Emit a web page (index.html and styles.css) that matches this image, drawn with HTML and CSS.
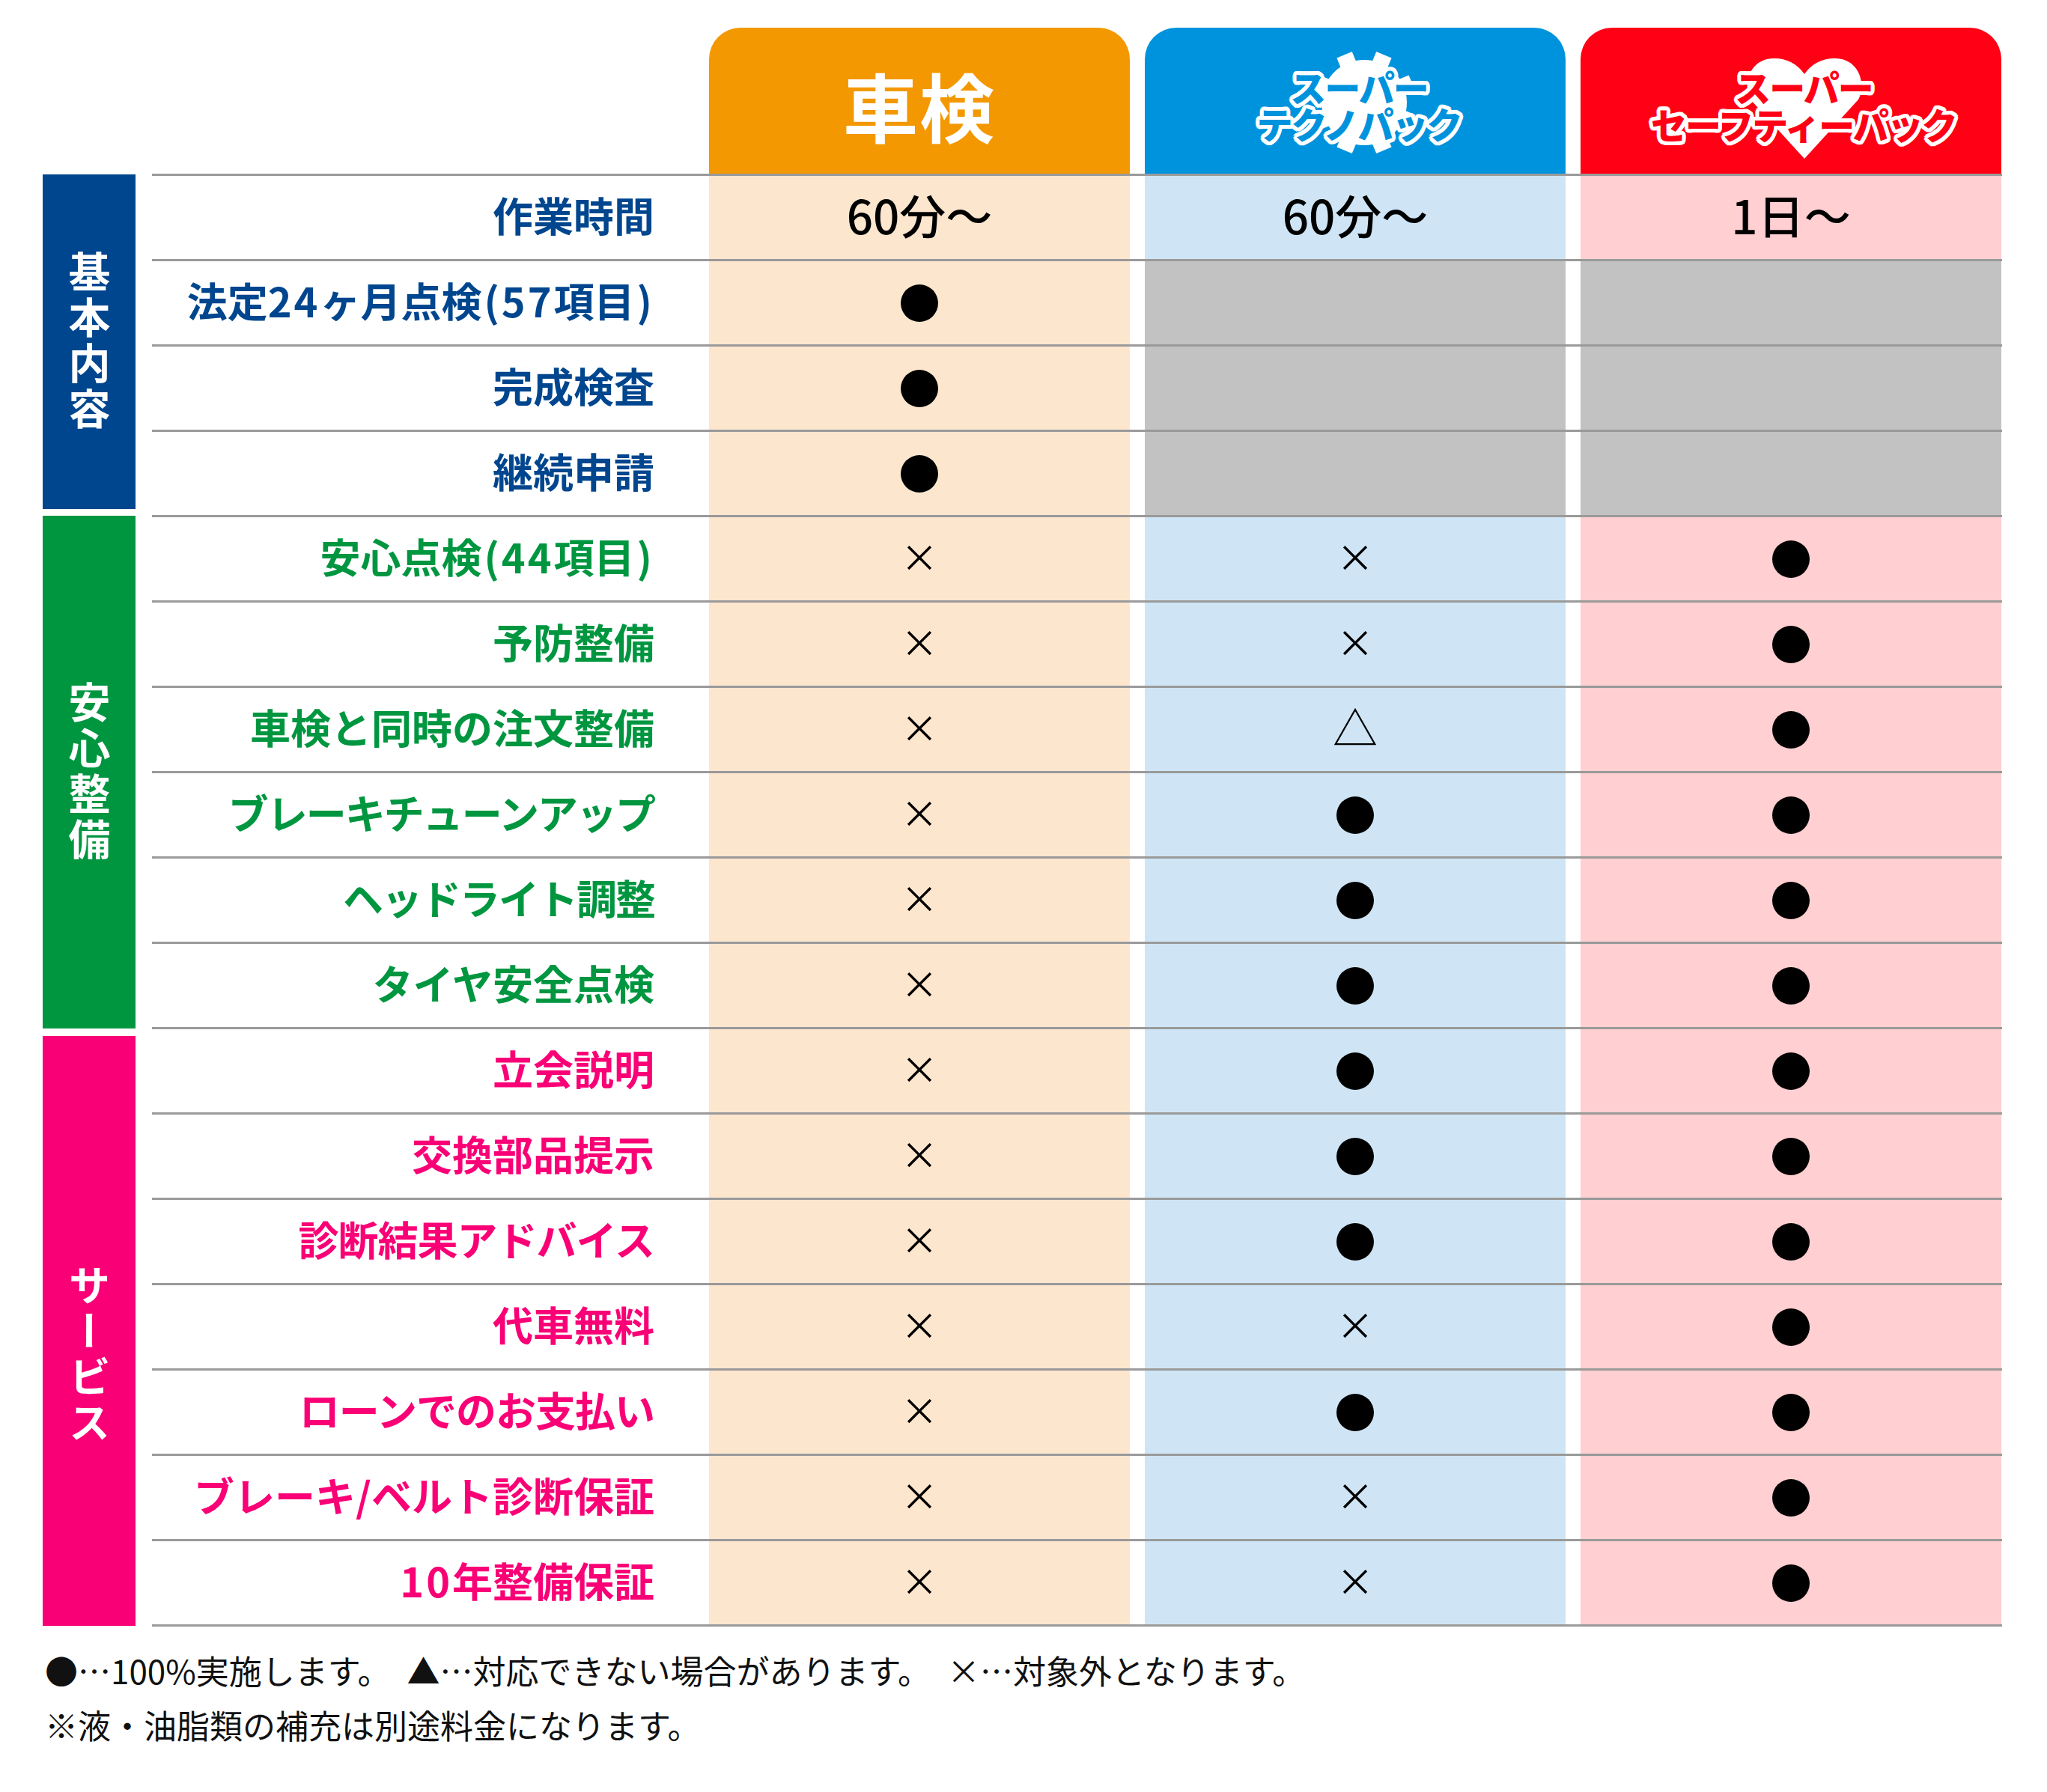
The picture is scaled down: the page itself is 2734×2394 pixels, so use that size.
FILE: index.html
```html
<!DOCTYPE html>
<html lang="ja">
<head>
<meta charset="utf-8">
<title>車検・スーパーテクノパック・スーパーセーフティーパック 比較表</title>
<link rel="stylesheet" href="styles.css">
</head>
<body>
<div class="page">
  <div class="heads">
    <div class="head head-o"><span class="head-title">車検</span></div>
    <div class="head head-b logo-box">
      <svg class="logo" viewBox="0 0 562 195" width="562" height="195">
        <g transform="translate(293 100)" fill="#fff">
          <circle r="57"/>
          <rect x="-11" y="-69" width="22" height="26" transform="rotate(22.5)"/>
          <rect x="-11" y="-69" width="22" height="26" transform="rotate(67.5)"/>
          <rect x="-11" y="-69" width="22" height="26" transform="rotate(112.5)"/>
          <rect x="-11" y="-69" width="22" height="26" transform="rotate(157.5)"/>
          <rect x="-11" y="-69" width="22" height="26" transform="rotate(202.5)"/>
          <rect x="-11" y="-69" width="22" height="26" transform="rotate(247.5)"/>
          <rect x="-11" y="-69" width="22" height="26" transform="rotate(292.5)"/>
          <rect x="-11" y="-69" width="22" height="26" transform="rotate(337.5)"/>
        </g>
      </svg>
      <p class="logo-t logo-tb">スーパー<br>テクノパック</p>
    </div>
    <div class="head head-r logo-box">
      <svg class="logo" viewBox="0 0 562 195" width="562" height="195">
        <path fill="#fff" d="M299 62 C288 45 267 38 249 42 C230 47 221 64 223 84 C224 89 225 92 227 96 L299 175 L371 96 C373 92 374 89 375 84 C377 64 368 47 349 42 C331 38 310 45 299 62 Z"/>
      </svg>
      <p class="logo-t logo-tr">スーパー<br>セーフティーパック</p>
    </div>
  </div>

  <div class="body">
    <div class="cats">
      <div class="cat cat-nv"><span>基本内容</span></div>
      <div class="cat cat-gr"><span>安心整備</span></div>
      <div class="cat cat-pk"><span>サービス</span></div>
    </div>

    <div class="rows">
      <div class="row"><div class="label nv"><span class="lt">作業時間</span></div><div class="cells"><div class="cell o"><span class="time">60分～</span></div><div class="cell b"><span class="time">60分～</span></div><div class="cell r"><span class="time">1日～</span></div></div></div>
      <div class="row"><div class="label nv"><span class="lt">法定<span class="num">24</span>ヶ月点検<span class="pa">(</span><span class="num">57</span>項目<span class="pa">)</span></span></div><div class="cells"><div class="cell o"><span class="dot"></span></div><div class="cell g"></div><div class="cell g"></div></div></div>
      <div class="row"><div class="label nv"><span class="lt">完成検査</span></div><div class="cells"><div class="cell o"><span class="dot"></span></div><div class="cell g"></div><div class="cell g"></div></div></div>
      <div class="row"><div class="label nv"><span class="lt">継続申請</span></div><div class="cells"><div class="cell o"><span class="dot"></span></div><div class="cell g"></div><div class="cell g"></div></div></div>

      <div class="row"><div class="label gr"><span class="lt">安心点検<span class="pa">(</span><span class="num">44</span>項目<span class="pa">)</span></span></div><div class="cells"><div class="cell o"><span class="x">×</span></div><div class="cell b"><span class="x">×</span></div><div class="cell r"><span class="dot"></span></div></div></div>
      <div class="row"><div class="label gr"><span class="lt">予防整備</span></div><div class="cells"><div class="cell o"><span class="x">×</span></div><div class="cell b"><span class="x">×</span></div><div class="cell r"><span class="dot"></span></div></div></div>
      <div class="row"><div class="label gr"><span class="lt">車検と同時の注文整備</span></div><div class="cells"><div class="cell o"><span class="x">×</span></div><div class="cell b"><span class="tri">△</span></div><div class="cell r"><span class="dot"></span></div></div></div>
      <div class="row"><div class="label gr"><span class="lt kana">ブレーキチューンアップ</span></div><div class="cells"><div class="cell o"><span class="x">×</span></div><div class="cell b"><span class="dot"></span></div><div class="cell r"><span class="dot"></span></div></div></div>
      <div class="row"><div class="label gr"><span class="lt kana">ヘッドライト調整</span></div><div class="cells"><div class="cell o"><span class="x">×</span></div><div class="cell b"><span class="dot"></span></div><div class="cell r"><span class="dot"></span></div></div></div>
      <div class="row"><div class="label gr"><span class="lt">タイヤ安全点検</span></div><div class="cells"><div class="cell o"><span class="x">×</span></div><div class="cell b"><span class="dot"></span></div><div class="cell r"><span class="dot"></span></div></div></div>

      <div class="row"><div class="label pk"><span class="lt">立会説明</span></div><div class="cells"><div class="cell o"><span class="x">×</span></div><div class="cell b"><span class="dot"></span></div><div class="cell r"><span class="dot"></span></div></div></div>
      <div class="row"><div class="label pk"><span class="lt">交換部品提示</span></div><div class="cells"><div class="cell o"><span class="x">×</span></div><div class="cell b"><span class="dot"></span></div><div class="cell r"><span class="dot"></span></div></div></div>
      <div class="row"><div class="label pk"><span class="lt kana-s">診断結果アドバイス</span></div><div class="cells"><div class="cell o"><span class="x">×</span></div><div class="cell b"><span class="dot"></span></div><div class="cell r"><span class="dot"></span></div></div></div>
      <div class="row"><div class="label pk"><span class="lt">代車無料</span></div><div class="cells"><div class="cell o"><span class="x">×</span></div><div class="cell b"><span class="x">×</span></div><div class="cell r"><span class="dot"></span></div></div></div>
      <div class="row"><div class="label pk"><span class="lt kana-s">ローンでのお支払い</span></div><div class="cells"><div class="cell o"><span class="x">×</span></div><div class="cell b"><span class="dot"></span></div><div class="cell r"><span class="dot"></span></div></div></div>
      <div class="row"><div class="label pk"><span class="lt">ブレーキ/ベルト診断保証</span></div><div class="cells"><div class="cell o"><span class="x">×</span></div><div class="cell b"><span class="x">×</span></div><div class="cell r"><span class="dot"></span></div></div></div>
      <div class="row"><div class="label pk"><span class="lt"><span class="num">10</span>年整備保証</span></div><div class="cells"><div class="cell o"><span class="x">×</span></div><div class="cell b"><span class="x">×</span></div><div class="cell r"><span class="dot"></span></div></div></div>
    </div>
  </div>

  <div class="notes">
    <p class="note">●…100%実施します。　▲…対応できない場合があります。　×…対象外となります。</p>
    <p class="note">※液・油脂類の補充は別途料金になります。</p>
  </div>
</div>
</body>
</html>
```

FILE: styles.css
```css
html, body {
  margin: 0;
  padding: 0;
  background: #ffffff;
}

body {
  font-family: "Noto Sans CJK JP", "Noto Sans", sans-serif;
  color: #111111;
}

.page {
  width: 2734px;
  box-sizing: border-box;
  padding: 37px 0 0 57px;
}

/* ===== header cards ===== */
.heads {
  display: flex;
  gap: 20px;
  padding-left: 890px;
}

.head {
  width: 562px;
  height: 195px;
  border-radius: 42px 42px 0 0;
  overflow: hidden;
}

.head-o {
  background: #f39800;
  display: flex;
  align-items: center;
  justify-content: center;
  box-sizing: border-box;
  padding-top: 10px;
}

.head-b { background: #0093dd; }
.head-r { background: #ff0015; }

.head-title {
  font-size: 100px;
  font-weight: 700;
  line-height: 1;
  color: #ffffff;
  letter-spacing: 2px;
}

/* logo: svg graphic and text stacked in one grid cell */
.logo-box {
  display: grid;
}

.logo-box > * {
  grid-area: 1 / 1;
}

.logo {
  display: block;
}

.logo-t {
  margin: 0;
  box-sizing: border-box;
  width: 562px;
  text-align: center;
  font-size: 48px;
  font-weight: 900;
  letter-spacing: -2px;
  white-space: nowrap;
  text-shadow:
    5px 0 0 #fff, -5px 0 0 #fff, 0 5px 0 #fff, 0 -5px 0 #fff,
    3.6px 3.6px 0 #fff, -3.6px 3.6px 0 #fff, 3.6px -3.6px 0 #fff, -3.6px -3.6px 0 #fff,
    4.6px 1.9px 0 #fff, -4.6px 1.9px 0 #fff, 4.6px -1.9px 0 #fff, -4.6px -1.9px 0 #fff,
    1.9px 4.6px 0 #fff, -1.9px 4.6px 0 #fff, 1.9px -4.6px 0 #fff, -1.9px -4.6px 0 #fff;
}

.logo-tb {
  color: #0093dd;
  line-height: 49px;
  padding: 54px 0 0 10px;
}

.logo-tr {
  color: #ff0015;
  line-height: 50px;
  padding: 53px 0 0 34px;
}

/* ===== body ===== */
.body {
  display: flex;
}

.cats {
  width: 124px;
  margin-right: 22px;
  padding-top: 1px;
  display: flex;
  flex-direction: column;
}

.cat {
  display: flex;
  align-items: center;
  justify-content: center;
  box-sizing: border-box;
}

.cat span {
  writing-mode: vertical-rl;
  font-size: 56px;
  font-weight: 700;
  line-height: 1;
  letter-spacing: 5px;
  color: #ffffff;
}

.cat-nv {
  height: 447px;
  margin-bottom: 9px;
  background: #00468e;
}

.cat-gr {
  height: 685px;
  margin-bottom: 10px;
  background: #009640;
}

.cat-pk {
  height: 788px;
  background: #f90076;
  padding-top: 66px;
}

.rows {
  width: 2471px;
}

.row {
  display: flex;
  height: 111px;
  border-bottom: 3px solid #9a9a9a;
}

.row:first-child {
  border-top: 3px solid #9a9a9a;
}

.label {
  width: 744px;
  box-sizing: border-box;
  padding-right: 73px;
  display: flex;
  align-items: center;
  justify-content: flex-end;
  font-size: 54px;
  font-weight: 700;
  line-height: 1;
  white-space: nowrap;
}

.lt {
  display: block;
  padding-bottom: 8px;
}

.kana { letter-spacing: -2px; }
.kana-s { letter-spacing: -1px; }

.num { letter-spacing: 3px; }
.pa { padding: 0 3px; }

.nv { color: #00468e; }
.gr { color: #009640; }
.pk { color: #f90076; }

.cells {
  display: flex;
  gap: 20px;
}

.cell {
  width: 562px;
  display: flex;
  align-items: center;
  justify-content: center;
}

.o { background: #fde6ce; }
.b { background: #cfe5f5; }
.r { background: #ffcfd1; }
.g { background: #c2c2c2; }

.time {
  display: block;
  font-size: 62px;
  font-weight: 500;
  line-height: 1;
  color: #000000;
  padding-bottom: 10px;
}

.x {
  display: block;
  font-size: 50px;
  font-weight: 400;
  line-height: 1;
  color: #000000;
  padding-bottom: 10px;
}

.tri {
  display: block;
  font-size: 60px;
  font-weight: 400;
  line-height: 1;
  color: #000000;
  padding-bottom: 10px;
}

.dot {
  display: block;
  width: 50px;
  height: 50px;
  border-radius: 50%;
  background: #000000;
}

/* ===== notes ===== */
.notes {
  padding: 22px 0 0 3px;
}

.note {
  margin: 0;
  font-size: 44px;
  line-height: 73px;
  color: #111111;
  white-space: pre;
}
```
